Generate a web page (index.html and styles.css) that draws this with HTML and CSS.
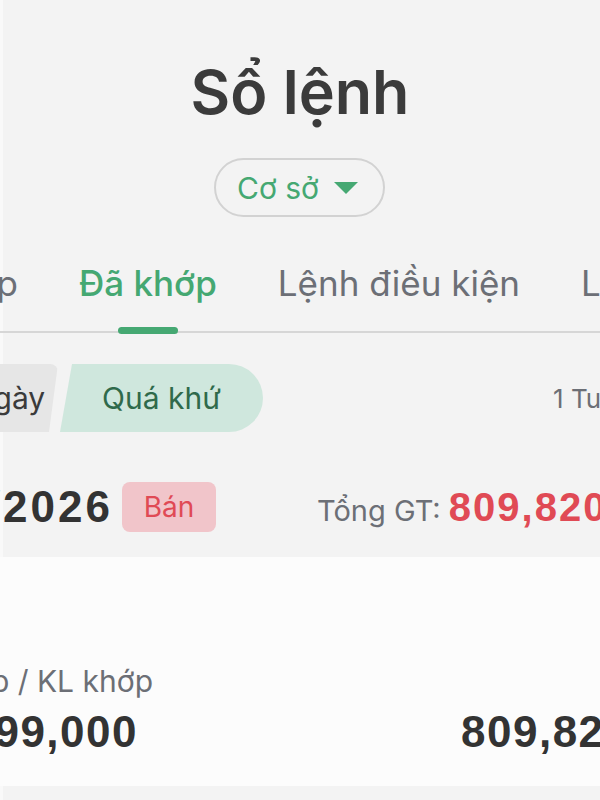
FILE: index.html
```html
<!DOCTYPE html>
<html lang="vi">
<head>
    <meta charset="UTF-8">
    <title>Sổ lệnh</title>
    <link rel="stylesheet" href="styles.css">
</head>
<body>
    <div class="screen">
        <h1 class="title">Sổ lệnh</h1>
        <div class="picker-wrap">
            <button class="picker">Cơ sở <span class="caret"></span></button>
        </div>

        <div class="tabs">
            <span class="cut tab-cut"><span class="tab">Chờ khớp</span></span>
            <span class="tab active">Đã khớp</span>
            <span class="tab">Lệnh điều kiện</span>
            <span class="tab">Lệnh</span>
        </div>

        <div class="filter">
            <div class="seg">
                <span class="seg-item today">Trong ngày</span>
                <span class="seg-item past">Quá khứ</span>
            </div>
            <span class="range">1 Tuần</span>
        </div>

        <div class="summary">
            <span class="cut date-cut"><span class="date">15/01/2026</span></span>
            <span class="badge">Bán</span>
            <div class="total">Tổng GT: <b>809,820,000</b></div>
        </div>

        <div class="card">
            <div class="cut label-cut"><span class="label">Giá khớp / KL khớp</span></div>
            <div class="values">
                <span class="cut num-cut"><span class="num">26,99,000</span></span>
                <span class="num right">809,820,000</span>
            </div>
        </div>
    </div>
</body>
</html>
```

FILE: styles.css
```css
body {
    margin: 0;
    background-color: #f3f3f3;
    font-family: "Inter", "Noto Sans", sans-serif;
    overflow: hidden;
}
.screen {
    width: 600px;
    height: 800px;
    overflow: hidden;
    box-shadow: inset 3px 0 0 #f9f9f9;
}
/* items cut by the left edge of the screen */
.cut {
    display: flex;
    justify-content: flex-end;
    flex: none;
    white-space: nowrap;
}
.title {
    margin: 0;
    padding-top: 56px;
    text-align: center;
    font-size: 61px;
    font-weight: 600;
    line-height: 72px;
    color: #3b3b3b;
}
.picker-wrap {
    display: flex;
    justify-content: center;
    margin-top: 30px;
}
.picker {
    display: flex;
    align-items: center;
    gap: 15px;
    height: 59px;
    padding: 0 25px 0 21px;
    background-color: transparent;
    border: 2px solid #d2d2d2;
    border-radius: 30px;
    font-family: "Inter", sans-serif;
    font-size: 30px;
    color: #45a872;
    margin-left: -1px;
}
.caret {
    width: 0;
    height: 0;
    border-left: 12px solid transparent;
    border-right: 12px solid transparent;
    border-top: 12px solid #45a872;
}
.tabs {
    display: flex;
    gap: 61px;
    margin-top: 46px;
    padding-bottom: 28px;
    border-bottom: 2px solid #d6d6d6;
    white-space: nowrap;
}
.tab-cut {
    width: 18px;
}
.tab {
    position: relative;
    font-size: 35px;
    color: #6c6f76;
    line-height: 40px;
    flex: none;
}
.tab.active {
    color: #45a872;
    font-weight: 500;
}
.tab.active::after {
    content: "";
    position: absolute;
    left: 50%;
    bottom: -31px;
    width: 60px;
    height: 7px;
    margin-left: -30px;
    border-radius: 4px;
    background-color: #45a872;
}
.filter {
    display: flex;
    align-items: center;
    margin-top: 31px;
    height: 68px;
    white-space: nowrap;
}
.seg {
    display: flex;
    height: 68px;
    margin-left: -128px;
}
.seg-item {
    display: flex;
    align-items: center;
    justify-content: center;
    font-size: 30px;
}
.today {
    width: 186px;
    background-color: #e6e6e6;
    color: #3b3b3b;
    border-radius: 8px;
    clip-path: polygon(0 0, 100% 0, calc(100% - 9px) 100%, 0 100%);
}
.past {
    width: 203px;
    margin-left: 2px;
    background-color: #cfe7dd;
    color: #2f6a4b;
    border-radius: 8px 34px 34px 0;
    clip-path: polygon(12px 0, 100% 0, 100% 100%, 0 100%);
}
.range {
    font-size: 26px;
    color: #6c6f76;
    margin-left: 290px;
}
.summary {
    display: flex;
    align-items: center;
    margin-top: 50px;
    height: 50px;
    white-space: nowrap;
}
.date-cut {
    width: 110px;
}
.date {
    font-family: "Liberation Sans", Arial, sans-serif;
    font-weight: bold;
    font-size: 44px;
    letter-spacing: 3px;
    margin-right: -3px;
    color: #333;
}
.badge {
    display: flex;
    align-items: center;
    justify-content: center;
    flex: none;
    width: 94px;
    height: 50px;
    margin-left: 12px;
    border-radius: 8px;
    background-color: #f1c5ca;
    color: #e04a55;
    font-size: 28px;
}
.total {
    font-size: 29px;
    color: #6c6f76;
    margin-left: 101px;
}
.total b {
    font-family: "Liberation Sans", Arial, sans-serif;
    font-size: 40px;
    letter-spacing: 2px;
    color: #e04a55;
}
.card {
    margin-top: 25px;
    height: 229px;
    background-color: #fcfcfc;
    padding-top: 106px;
    box-sizing: border-box;
    white-space: nowrap;
}
.label-cut {
    width: 153px;
}
.label {
    font-size: 30px;
    color: #6c6f76;
}
.values {
    display: flex;
    margin-top: 8px;
    white-space: nowrap;
}
.num-cut {
    width: 138px;
}
.num {
    font-family: "Liberation Sans", Arial, sans-serif;
    font-weight: bold;
    font-size: 44px;
    letter-spacing: 1.5px;
    color: #333;
}
.num.right {
    margin-left: 323px;
}
```
